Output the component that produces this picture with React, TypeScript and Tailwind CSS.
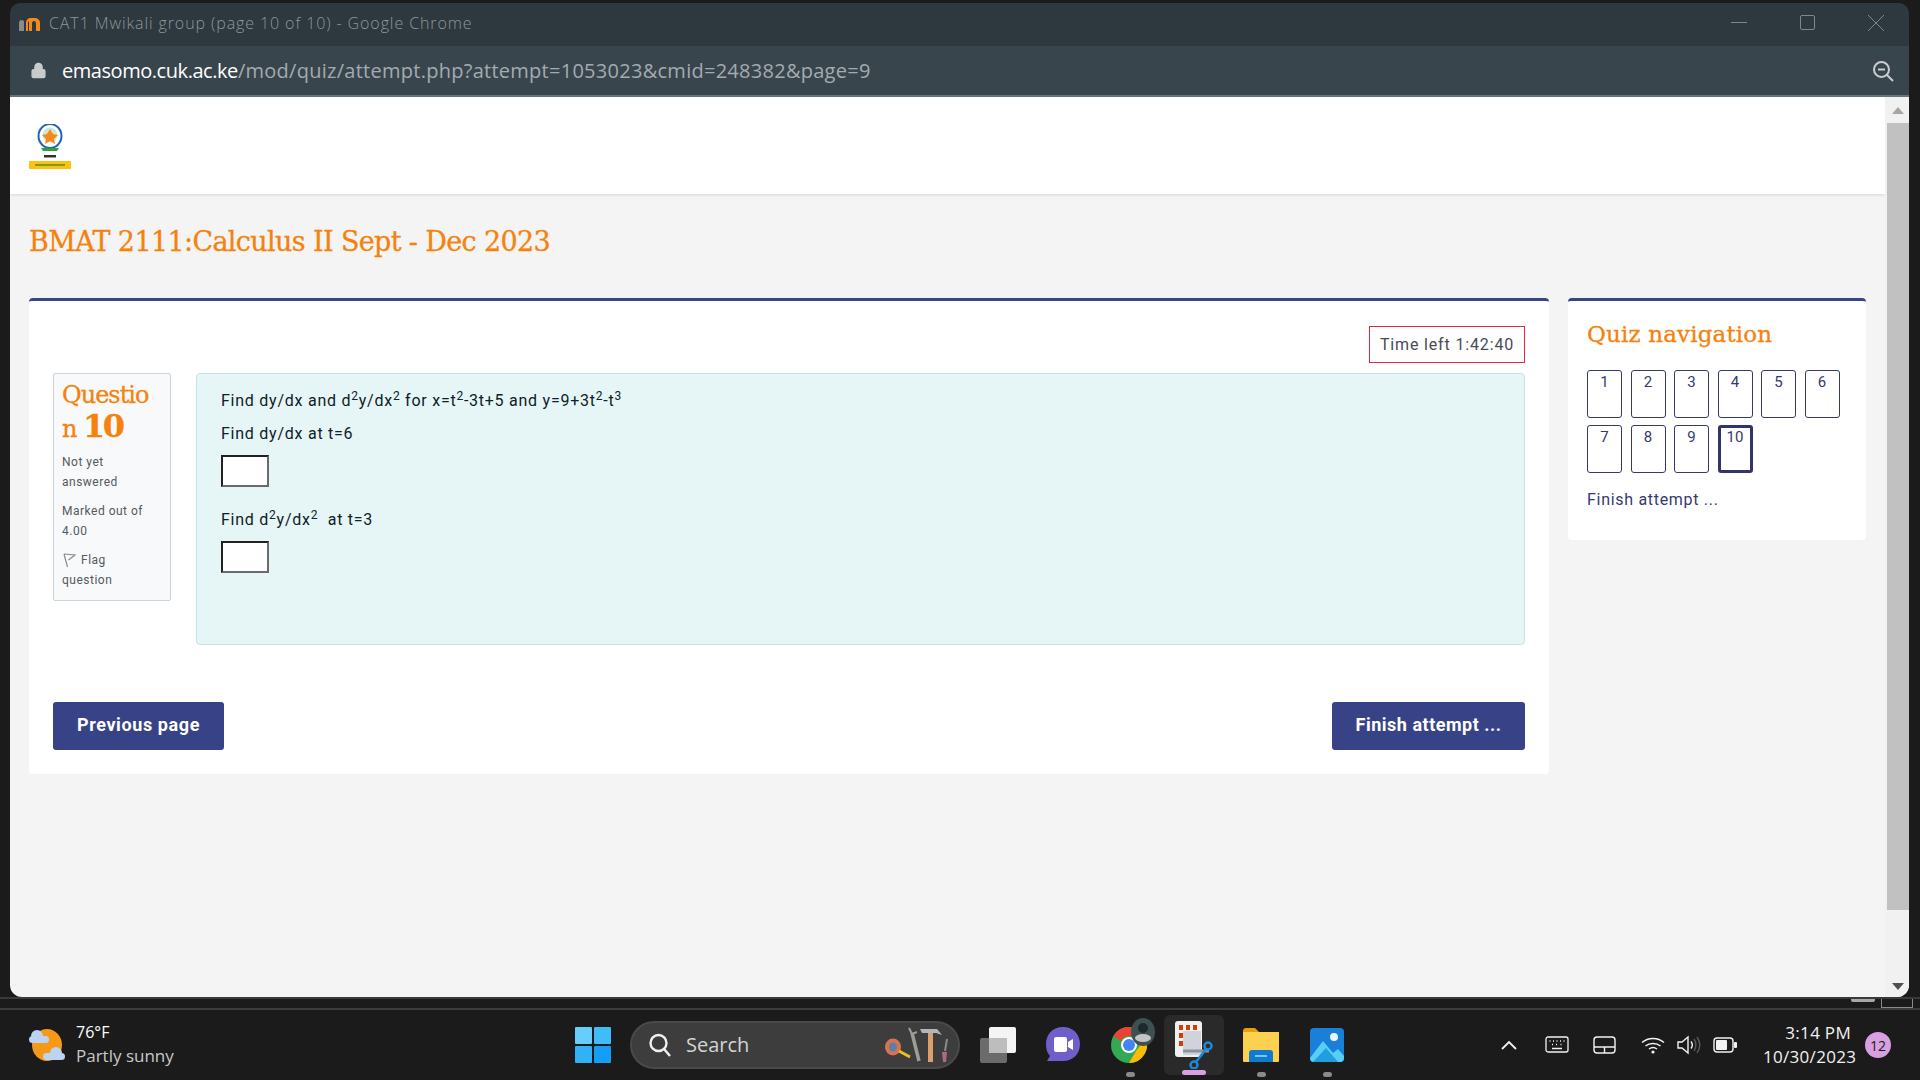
import React from 'react';
import { Lock } from 'lucide-react';

const SLAB = "font-['DejaVu_Serif','Liberation_Serif',serif] [-webkit-text-stroke:0.3px_#f5820d]";
const ROBOTO = "font-['Roboto','Liberation_Sans',sans-serif]";
const NAV_ROWS = [
  ['1', '2', '3', '4', '5', '6'],
  ['7', '8', '9', '10'],
];

function MoodleIcon() {
  return (
    <svg width="24" height="18" viewBox="0 0 24 18">
      <path d="M8 17V9c0-3 2-5 5-5h3c4 0 6 2 6 5v8h-4V9c0-1-1-2-2-2s-2 1-2 2v8h-3V9c0-1-.5-2-1-2v10z" fill="#f28a1c" />
      <path d="M1 17V9c0-2 1-3 3-3l2 1v10z" fill="#8b8b8b" />
    </svg>
  );
}

function ZoomOutIcon() {
  return (
    <svg width="22" height="22" viewBox="0 0 22 22" fill="none" stroke="#c8cccf" strokeWidth="2">
      <circle cx="9.5" cy="9.5" r="7.5" />
      <path d="M6 9.5h7M15 15l6 6" />
    </svg>
  );
}

function CukLogo() {
  return (
    <svg width="42" height="45" viewBox="0 0 42 45">
      <ellipse cx="21" cy="12" rx="11.500" ry="12" fill="#fff" stroke="#1f66b5" strokeWidth="2" />
      <circle cx="21" cy="11" r="7.500" fill="#cfe6d2" />
      <path d="M21 5l3 5 5 1-4 4 1 5-5-3-5 3 1-5-4-4 5-1z" fill="#f28a1c" />
      <path d="M12 24h18l-2 3H14z" fill="#2f9e44" />
      <rect x="15" y="31" width="12" height="2.500" fill="#333" />
      <rect x="0" y="37" width="42" height="8" fill="#fdc20d" />
      <rect x="6" y="40" width="30" height="2" fill="#7b9a1e" />
    </svg>
  );
}

function FlagIcon() {
  return (
    <svg width="14" height="15" viewBox="0 0 14 15" fill="none" stroke="#8a8a8a" strokeWidth="1.2">
      <path d="M2 1l3.5 13M2 1l11 1-6.5 5" />
    </svg>
  );
}

function WeatherIcon() {
  return (
    <svg width="38" height="36" viewBox="0 0 38 36">
      <ellipse cx="19" cy="18" rx="15" ry="16" fill="#f49a18" />
      <g fill="#bcd4f2">
        <circle cx="9" cy="9" r="6" />
        <rect x="1" y="9" width="20" height="7" rx="3.5" />
        <circle cx="28" cy="26" r="6" />
        <rect x="15" y="26" width="22" height="7" rx="3.5" />
      </g>
    </svg>
  );
}

function WindowsLogo() {
  return (
    <svg width="36" height="36" viewBox="0 0 36 36">
      <rect width="17" height="17" rx="1" fill="#67cdfb" />
      <rect x="19" width="17" height="17" rx="1" fill="#3ebdf8" />
      <rect y="19" width="17" height="17" rx="1" fill="#2fb2f6" />
      <rect x="19" y="19" width="17" height="17" rx="1" fill="#149ef5" />
    </svg>
  );
}

function SearchIcon() {
  return (
    <svg width="24" height="26" viewBox="0 0 24 26" fill="none" stroke="#f0f0f0" strokeWidth="2.4">
      <circle cx="10.5" cy="11" r="8" />
      <path d="M16 17l6 7" />
    </svg>
  );
}

function ToolsIcon() {
  return (
    <svg width="66" height="36" viewBox="0 0 66 36">
      <ellipse cx="9" cy="20" rx="8" ry="8.5" fill="#d9734e" />
      <ellipse cx="9" cy="20" rx="4" ry="4.5" fill="#5b7fa8" />
      <path d="M15 24l11 6" stroke="#e6c229" strokeWidth="3" />
      <path d="M28 6l7 28" stroke="#9d9d96" strokeWidth="3.5" />
      <path d="M25 1l3 6 5-2" fill="none" stroke="#9d9d96" strokeWidth="2" />
      <rect x="44" y="6" width="5" height="29" fill="#d9a06c" />
      <path d="M36 2h17l5 6-6-2H38z" fill="#b5b5b5" />
      <path d="M63 12l-2 12" stroke="#8a8a8a" strokeWidth="2" />
      <path d="M58 25h5l-1 10h-3z" fill="#b06a80" />
    </svg>
  );
}

function TaskViewIcon() {
  return (
    <svg width="36" height="36" viewBox="0 0 36 36">
      <rect y="11" width="27" height="25" rx="2" fill="#6b6b6b" />
      <rect x="9" width="27" height="26" rx="2" fill="#f4f4f4" />
      <rect x="9" y="11" width="18" height="15" fill="#bdbdbd" />
    </svg>
  );
}

function ChatIcon() {
  return (
    <svg width="34" height="36" viewBox="0 0 34 36">
      <path d="M17 0c10 0 17 7 17 17S27 34 17 34H1l3-5C1 26 0 22 0 17 0 7 7 0 17 0z" fill="#6f5fcb" />
      <rect x="8" y="10" width="13" height="15" rx="2" fill="#fff" />
      <path d="M22 15l5-3v11l-5-3z" fill="#fff" />
    </svg>
  );
}

function ChromeIcon() {
  return (
    <div className="relative w-[40px] h-[40px]">
      <svg width="36" height="36" viewBox="0 0 36 36" className="mt-[2px] ml-[1px]">
        <circle cx="18" cy="18" r="18" fill="#34a853" />
        <path d="M18 0a18 18 0 0 1 15.6 9H18a9 9 0 0 0-8 5L2.4 9A18 18 0 0 1 18 0z" fill="#ea4335" />
        <path d="M33.6 9A18 18 0 0 1 18 36l7.6-13a9 9 0 0 0 0-14z" fill="#fbbc05" />
        <circle cx="18" cy="18" r="8" fill="#fff" />
        <circle cx="18" cy="18" r="6" fill="#4285f4" />
      </svg>
      <svg width="26" height="30" viewBox="0 0 26 30" className="absolute right-[-6px] top-[-8px]">
        <ellipse cx="13" cy="15" rx="12" ry="14" fill="#3f5052" />
        <circle cx="13" cy="11" r="5" fill="#1d2a2b" />
        <ellipse cx="13" cy="21" rx="8" ry="4" fill="#c4c4c4" />
      </svg>
    </div>
  );
}

function SnipIcon() {
  return (
    <svg width="38" height="48" viewBox="0 0 38 48">
      <rect width="27" height="36" rx="3" fill="#f1f1f1" />
      <g fill="#d83b01">
        <rect x="4" y="4" width="4" height="5" />
        <rect x="11" y="4" width="4" height="5" />
        <rect x="18" y="4" width="4" height="5" />
        <rect x="4" y="12" width="4" height="5" />
        <rect x="4" y="20" width="4" height="5" />
      </g>
      <rect x="8" y="10" width="18" height="24" fill="#cfd4dc" />
      <path d="M8 30h26" stroke="#8b93a0" strokeWidth="3" />
      <g fill="none" stroke="#1e88d8" strokeWidth="2.5">
        <circle cx="33" cy="25" r="3.5" />
        <circle cx="19" cy="44" r="3.5" />
        <path d="M31 28l-10 13" />
      </g>
    </svg>
  );
}

function FolderIcon() {
  return (
    <svg width="36" height="34" viewBox="0 0 36 34">
      <path d="M0 3c0-2 1-3 3-3h9l4 4h20v6H0z" fill="#e3a008" />
      <rect y="4" width="36" height="30" rx="1" fill="#fdd04f" />
      <path d="M6 34v-9c0-2 1-3 3-3h18c2 0 3 1 3 3v9z" fill="#0f7bd0" />
      <rect x="12" y="27" width="12" height="2" fill="#7cc3f2" />
    </svg>
  );
}

function PhotosIcon() {
  return (
    <svg width="34" height="34" viewBox="0 0 34 34">
      <rect width="34" height="34" rx="4" fill="#1a7fd8" />
      <circle cx="24" cy="9" r="4" fill="#e9f4fd" />
      <path d="M0 30L13 13l10 12 5-4 6 7v2a4 4 0 0 1-4 4H4a4 4 0 0 1-4-4z" fill="#56cff5" />
      <path d="M3 34l13-14 12 14z" fill="#1f9fe0" />
    </svg>
  );
}

function KeyboardIcon() {
  return (
    <svg width="24" height="18" viewBox="0 0 24 18" fill="none" stroke="#f2f2f2" strokeWidth="1.3">
      <rect x="1" y="1" width="22" height="15" rx="2" />
      <path d="M4.5 5h1M8 5h1M11.5 5h1M15 5h1M18.5 5h1M7 8.5h1M11 8.5h1M15.5 8.5h1M7 12.5h10" strokeWidth="1.6" />
    </svg>
  );
}

function TouchpadIcon() {
  return (
    <svg width="23" height="18" viewBox="0 0 23 18" fill="none" stroke="#f2f2f2" strokeWidth="1.4">
      <rect x="1" y="1" width="21" height="16" rx="3" />
      <path d="M1 11h21M11.5 11v6" />
    </svg>
  );
}

function WifiIcon() {
  return (
    <svg width="24" height="18" viewBox="0 0 24 18" fill="none" stroke="#f2f2f2" strokeWidth="1.5">
      <path d="M1 6.5c6-5.500 16-5.500 22 0M4.500 10c4-3.500 11-3.500 15 0M8 13c2.500-1.800 5.500-1.800 8 0" />
      <circle cx="12" cy="16" r="1.600" fill="#f2f2f2" stroke="none" />
    </svg>
  );
}

function SpeakerIcon() {
  return (
    <svg width="24" height="20" viewBox="0 0 24 20" fill="none" strokeWidth="1.400">
      <path d="M1 7h4l6-5v16l-6-5H1z" stroke="#f2f2f2" />
      <path d="M14 6.500c1.500 2 1.500 5 0 7" stroke="#f2f2f2" />
      <path d="M17 4c2.500 3.500 2.500 8.500 0 12M20 2c3.500 5 3.500 11 0 16" stroke="#5a5a5a" />
    </svg>
  );
}

function BatteryIcon() {
  return (
    <svg width="24" height="16" viewBox="0 0 24 16">
      <rect x="1" y="1" width="19" height="14" rx="3" fill="none" stroke="#f2f2f2" strokeWidth="1.400" />
      <rect x="3" y="3" width="11" height="10" rx="1" fill="#f2f2f2" />
      <rect x="21" y="5" width="3" height="6" rx="1" fill="#f2f2f2" />
    </svg>
  );
}

function NavButton({ label }: { label: string }) {
  const current = label === '10';
  return (
    <div
      className={`w-[35px] h-[48px] rounded-[3px] text-center text-[#36396f] text-[15px] leading-[18px] ${
        current ? 'border-[3px] border-[#32356b] pt-0' : 'border border-[#36396f] pt-[2px]'
      }`}
    >
      {label}
    </div>
  );
}

function AnswerInput() {
  return <div className="w-[48px] h-[32px] bg-white border-2 border-t-[#222] border-l-[#222] border-r-[#6b6b6b] border-b-[#6b6b6b]" />;
}

function TaskbarSlot({ children, dot }: { children: React.ReactNode; dot?: boolean }) {
  return (
    <div className="relative flex items-center justify-center w-[54px] h-[60px]">
      {children}
      {dot && <span className="absolute bottom-[-2px] w-[9px] h-[5px] rounded-full bg-[#8a8a8a]" />}
    </div>
  );
}

export default function App() {
  return (
    <div className="w-[1920px] h-[1080px] overflow-hidden bg-[#1b1b1b] flex flex-col">
      <div className="h-[997px] pt-[3px] pl-[10px] pr-[11px] shrink-0">
        <div className="h-full flex flex-col rounded-t-[10px] rounded-b-[12px] overflow-hidden">
          <div className="h-[43px] shrink-0 bg-[#2d383f] flex items-center pl-[8px] pb-[4px] font-['Open_Sans',sans-serif]">
            <MoodleIcon />
            <span className="ml-[7px] text-[16px] font-light text-[#8d979c] tracking-[0.9px]">
              CAT1 Mwikali group (page 10 of 10) - Google Chrome
            </span>
            <div className="ml-auto flex items-center gap-[53px] pr-[25px]">
              <div className="w-[16px] h-px bg-[#7d878c]" />
              <div className="w-[15px] h-[15px] rounded-[2px] border border-[#7d878c]" />
              <svg width="16" height="16" viewBox="0 0 16 16" stroke="#7d878c" strokeWidth="1">
                <path d="M0 0l16 16M16 0L0 16" />
              </svg>
            </div>
          </div>
          <div className="h-[51px] shrink-0 bg-[#39454d] border-b-[2px] border-[#66757d] flex items-center pl-[20px] pr-[15px] font-['Open_Sans',sans-serif]">
            <Lock className="w-[17px] h-[17px] text-[#c7cbce]" fill="#c7cbce" />
            <span className="ml-[15px] text-[20px] tracking-[-0.45px] text-white">emasomo.cuk.ac.ke</span>
            <span className="text-[20px] tracking-[0.27px] text-[#a3abb0]">/mod/quiz/attempt.php?attempt=1053023&amp;cmid=248382&amp;page=9</span>
            <div className="ml-auto">
              <ZoomOutIcon />
            </div>
          </div>
          <div className="flex-1 flex min-h-0 bg-[#f4f4f4]">
            <div className={`flex-1 min-w-0 ${ROBOTO}`}>
              <div className="h-[97px] bg-white shadow-[0_1px_3px_rgba(0,0,0,0.12)] pt-[27px] pl-[19px]">
                <CukLogo />
              </div>
              <div className="px-[19px] pt-[28px]">
                <h1 className={`${SLAB} text-[27px] leading-[40px] text-[#f5820d] tracking-[-0.65px]`}>
                  BMAT 2111:Calculus II Sept - Dec 2023
                </h1>
                <div className="mt-[36px] flex items-start gap-[19px]">
                  <div className="w-[1520px] h-[476px] bg-white rounded-[4px] border-t-[3px] border-[#3a4587] px-[24px] pt-[25px]">
                    <div className="flex justify-end">
                      <div className="h-[37px] w-[156px] border border-[#e3273f] flex items-center justify-center text-[16px] text-[#474b55] tracking-[0.85px]">
                        Time left 1:42:40
                      </div>
                    </div>
                    <div className="mt-[10px] flex gap-[25px]">
                      <div className="w-[118px] h-[228px] shrink-0 bg-[#f8f9fa] border border-[#cdd4dc] rounded-[2px] pl-[8px] pt-[6px] text-[12px] leading-[20px] tracking-[0.5px] text-[#555a60]">
                        <div className={`${SLAB} text-[24px] leading-[31px] text-[#f5820d] tracking-[-1px]`}>
                          Questio
                          <br />n <span className="text-[32px] font-bold tracking-[-2.5px]">10</span>
                        </div>
                        <p className="mt-[7px]">
                          Not yet
                          <br />
                          answered
                        </p>
                        <p className="mt-[9px]">
                          Marked out of
                          <br />
                          4.00
                        </p>
                        <p className="mt-[9px]">
                          <span className="inline-block align-middle mr-[5px]">
                            <FlagIcon />
                          </span>
                          Flag
                          <br />
                          question
                        </p>
                      </div>
                      <div className="flex-1 h-[272px] bg-[#e6f5f6] border border-[#c0e4ea] rounded-[4px] pl-[24px] pt-[15px] text-[16px] leading-[24px] tracking-[0.75px] text-[#0f2027]">
                        <p>
                          Find dy/dx and d<sup>2</sup>y/dx<sup>2</sup> for x=t<sup>2</sup>-3t+5 and y=9+3t<sup>2</sup>-t<sup>3</sup>
                        </p>
                        <p className="mt-[9px]">Find dy/dx at t=6</p>
                        <div className="mt-[9px]">
                          <AnswerInput />
                        </div>
                        <p className="mt-[21px]">
                          Find d<sup>2</sup>y/dx<sup>2</sup>&nbsp; at t=3
                        </p>
                        <div className="mt-[9px]">
                          <AnswerInput />
                        </div>
                      </div>
                    </div>
                    <div className="mt-[57px] flex justify-between">
                      <button className="h-[48px] w-[171px] pb-[3px] rounded-[3px] bg-[#384387] text-white text-[18px] font-bold tracking-[0.6px]">Previous page</button>
                      <button className="h-[48px] w-[193px] pb-[3px] rounded-[3px] bg-[#384387] text-white text-[18px] font-bold tracking-[0.5px]">Finish attempt ...</button>
                    </div>
                  </div>
                  <div className="w-[298px] h-[242px] bg-white rounded-[4px] border-t-[3px] border-[#3a4587] pl-[19px] pt-[17px]">
                    <h2 className={`${SLAB} text-[23px] leading-[32px] text-[#f5820d] tracking-[0.15px]`}>Quiz navigation</h2>
                    <div className="mt-[20px] flex flex-col gap-[7px]">
                      {NAV_ROWS.map((row, i) => (
                        <div key={i} className="flex gap-[8.5px]">
                          {row.map((label) => (
                            <NavButton key={label} label={label} />
                          ))}
                        </div>
                      ))}
                    </div>
                    <p className="mt-[17px] text-[16px] leading-[20px] text-[#36396f] tracking-[0.7px]">Finish attempt ...</p>
                  </div>
                </div>
              </div>
            </div>
            <div className="w-[24px] shrink-0 bg-[#f1f1f1] flex flex-col items-center pl-[2px]">
              <div className="h-[26px] flex items-center justify-center">
                <div className="w-0 h-0 border-x-[6px] border-x-transparent border-b-[7px] border-b-[#a6a6a6]" />
              </div>
              <div className="w-full h-[787px] bg-[#c1c1c1]" />
              <div className="flex-1 flex items-end justify-center pb-[7px]">
                <div className="w-0 h-0 border-x-[6px] border-x-transparent border-t-[7px] border-t-[#505050]" />
              </div>
            </div>
          </div>
        </div>
      </div>
      <div className="relative h-[13px] shrink-0 overflow-hidden border-t-[2px] border-t-[#3a3a3a] border-b-[2px] border-b-[#3c3c3c]">
        <div className="absolute left-[1851px] top-0 w-[24px] h-[3px] rounded-b-[2px] bg-[#a8a8a8]" />
        <div className="absolute left-[1881px] top-0 w-[32px] h-[9px] border-b border-x border-[#8a8a8a]" />
      </div>
      <div className="flex-1 flex items-center font-['Open_Sans',sans-serif]">
        <div className="flex items-center w-[630px] pl-[28px]">
          <WeatherIcon />
          <div className="ml-[10px] leading-[24px] mt-[-2px]">
            <div className="text-[16px] text-white">76°F</div>
            <div className="text-[17px] text-[#c8c8c8]">Partly sunny</div>
          </div>
          <div className="ml-auto mr-[19px]">
            <WindowsLogo />
          </div>
        </div>
        <div className="w-[330px] h-[48px] rounded-full bg-[#3d3d3d] border-2 border-[#4a4a4a] flex items-center pl-[16px] pr-[8px]">
          <SearchIcon />
          <span className="ml-[14px] text-[20px] text-[#d4d4d4]">Search</span>
          <div className="ml-auto">
            <ToolsIcon />
          </div>
        </div>
        <div className="ml-[11px] flex items-center">
          <TaskbarSlot>
            <TaskViewIcon />
          </TaskbarSlot>
          <div className="w-[11px]" />
          <TaskbarSlot>
            <ChatIcon />
          </TaskbarSlot>
          <div className="w-[13px]" />
          <TaskbarSlot dot>
            <ChromeIcon />
          </TaskbarSlot>
          <div className="relative ml-[7px] flex items-center justify-center w-[60px] h-[60px] rounded-[6px] bg-[#2a2a2a]">
            <SnipIcon />
            <span className="absolute bottom-[0px] w-[24px] h-[5px] rounded-full bg-[#d8a0e0]" />
          </div>
          <div className="w-[10px]" />
          <TaskbarSlot dot>
            <FolderIcon />
          </TaskbarSlot>
          <div className="w-[12px]" />
          <TaskbarSlot dot>
            <PhotosIcon />
          </TaskbarSlot>
        </div>
        <div className="ml-[147px] flex items-center">
          <svg width="16" height="10" viewBox="0 0 16 10" fill="none" stroke="#f2f2f2" strokeWidth="1.800">
            <path d="M1 9l7-7 7 7" />
          </svg>
          <div className="ml-[28px]"><KeyboardIcon /></div>
          <div className="ml-[24px]"><TouchpadIcon /></div>
          <div className="ml-[25px]"><WifiIcon /></div>
          <div className="ml-[12px]"><SpeakerIcon /></div>
          <div className="ml-[12px]"><BatteryIcon /></div>
          <div className="ml-[26px] w-[88px] text-right text-[17px] leading-[24px] tracking-[0.3px] text-[#f2f2f2]">
            <div>3:14 PM</div>
            <div className="whitespace-nowrap">10/30/2023</div>
          </div>
          <div className="ml-[14px] w-[26px] h-[26px] rounded-full bg-[#d8a0e0] flex items-center justify-center text-[14px] text-[#1b1b1b]">12</div>
        </div>
      </div>
    </div>
  );
}
